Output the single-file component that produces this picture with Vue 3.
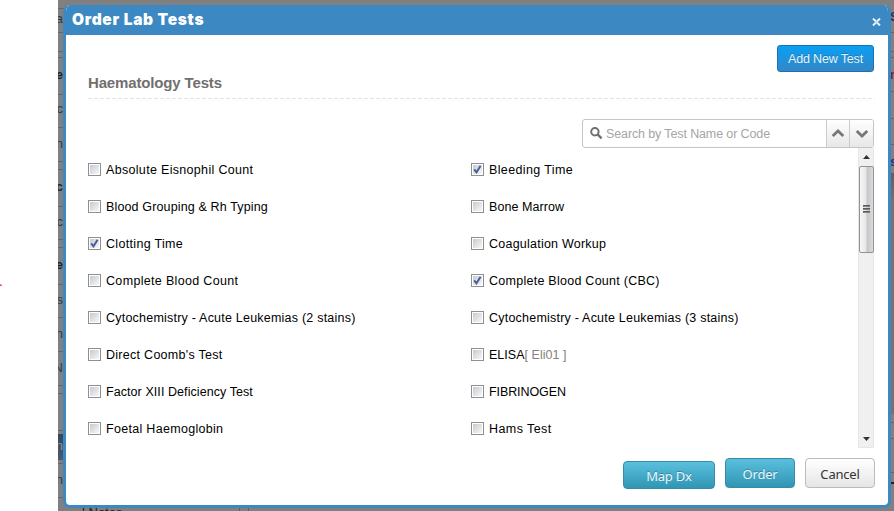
<script setup>
import { ref } from 'vue'

const tests = ref([
  { name: 'Absolute Eisnophil Count', w: 147 },
  { name: 'Bleeding Time', w: 84, on: true },
  { name: 'Blood Grouping & Rh Typing', w: 162 },
  { name: 'Bone Marrow', w: 75 },
  { name: 'Clotting Time', w: 77, on: true },
  { name: 'Coagulation Workup', w: 117 },
  { name: 'Complete Blood Count', w: 132 },
  { name: 'Complete Blood Count (CBC)', w: 170.5, on: true },
  { name: 'Cytochemistry - Acute Leukemias (2 stains)', w: 250 },
  { name: 'Cytochemistry - Acute Leukemias (3 stains)', w: 250 },
  { name: "Direct Coomb's Test", w: 116.5 },
  { name: 'ELISA', code: '[ Eli01 ]', w: 77.5 },
  { name: 'Factor XIII Deficiency Test', w: 147 },
  { name: 'FIBRINOGEN', w: 77 },
  { name: 'Foetal Haemoglobin', w: 117 },
  { name: 'Hams Test', w: 62.5 },
])

const canvas = document.createElement('canvas').getContext('2d')
canvas.font = '12.5px "Liberation Sans", Arial, sans-serif'
const spacing = (t) => {
  const s = t.name + (t.code || '')
  return ((t.w - canvas.measureText(s).width) / (s.length - 1)).toFixed(3) + 'px'
}

const leftLines = [8, 32, 51, 57, 94, 127, 161, 169, 206, 239, 247, 284, 317, 351, 385, 393, 430, 463, 497]
const rightLines = [32, 51, 57, 91, 118, 144, 422, 438, 472]
const leftBits = [
  { t: 'a', y: 11 }, { t: 'e', y: 67, b: true }, { t: 'c', y: 101 }, { t: 'n', y: 136 },
  { t: 'c', y: 179, b: true }, { t: 'c', y: 214 }, { t: 'e', y: 257, b: true }, { t: 's', y: 292 },
  { t: 'n', y: 326 }, { t: 'N', y: 360 }, { t: 'n', y: 438, light: true }, { t: 'n', y: 472 },
]
</script>

<template>
  <main class="screen">
    <div class="backdrop">
      <b class="navy"></b>
      <i v-for="y in leftLines" :key="'l' + y" class="line" :style="{ top: y + 'px' }"></i>
      <i v-for="y in rightLines" :key="'r' + y" class="line right" :style="{ top: y + 'px' }"></i>
      <span v-for="b in leftBits" :key="b.y" class="bit" :class="{ bold: b.b, light: b.light }" :style="{ top: b.y + 'px' }">{{ b.t }}</span>
      <span class="notes">l Notes</span>
      <b class="sep"></b>
      <b class="rbit blue">S</b>
      <b class="rbit red">n</b>
      <b class="rbit dots">s</b>
      <b class="rshade"></b>
      <b class="tick"></b>
    </div>
    <span class="required">.</span>

    <section class="dialog">
      <header class="bar">
        <h1>Order Lab Tests</h1>
        <svg class="close" width="9" height="8" viewBox="0 0 9 8"><path d="M1 .5 8 7.5M8 .5 1 7.5" stroke="#e6f1f8" stroke-width="2" /><path d="M3.5 4h2" stroke="#9cc4e2" /></svg>
      </header>
      <div class="body">
        <div class="top"><button class="add">Add New Test</button></div>
        <h2><span>Haematology Tests</span></h2>
        <div class="searchrow">
          <div class="search">
            <svg width="13" height="13" viewBox="0 0 13 13" fill="none" stroke="#707070" stroke-width="2"><circle cx="4.9" cy="4.7" r="3.7" /><path d="m7.6 7.4 4 4" stroke-width="2.4" /></svg>
            <span>Search by Test Name or Code</span>
          </div>
          <button class="step"><svg width="14" height="9" viewBox="0 0 14 9"><path d="m1.7 7 5.3-5 5.3 5" /></svg></button>
          <button class="step last"><svg width="14" height="9" viewBox="0 0 14 9"><path d="m1.7 2 5.3 5 5.3-5" /></svg></button>
        </div>
        <div class="scroller">
          <ul>
            <li v-for="t in tests" :key="t.name" @click="t.on = !t.on">
              <span class="box"><svg v-if="t.on" width="9" height="9" viewBox="0 0 9 9"><path d="m1.2 4.3 2.3 3L7.6.8" fill="none" stroke="#4a5f97" stroke-width="2" /></svg></span>
              <span class="name" :style="{ letterSpacing: spacing(t) }">{{ t.name }}<em v-if="t.code">{{ t.code }}</em></span>
            </li>
          </ul>
          <div class="track">
            <svg class="arrow" width="7" height="4" viewBox="0 0 7 4"><path d="M0 4 3.5 0 7 4Z" fill="#333" /></svg>
            <div class="thumb"><i></i><i></i><i></i></div>
            <svg class="arrow down" width="7" height="4" viewBox="0 0 7 4"><path d="M0 0 3.5 4 7 0Z" fill="#333" /></svg>
          </div>
        </div>
        <footer>
          <button class="teal map">Map Dx</button>
          <button class="teal">Order</button>
          <button class="cancel">Cancel</button>
        </footer>
      </div>
    </section>
  </main>
</template>

<style>
body { margin: 0; overflow: hidden; background: #fff; }
</style>

<style scoped>
* { box-sizing: border-box; }
.screen { position: relative; width: 894px; height: 511px; padding: 5px 3px 0 63px; overflow: hidden; font: 12.5px/15px "Liberation Sans", Arial, sans-serif; }
.backdrop { position: absolute; inset: 0 0 0 58px; background: #808080; overflow: hidden; }
.line { position: absolute; left: 0; width: 6px; height: 1px; background: #686868; }
.line.right { left: auto; right: 0; }
.bit { position: absolute; left: 0; width: 5px; direction: rtl; color: #37383c; font-size: 13px; }
.bold { font-weight: bold; color: #222; }
.light { color: #8b929b; }
.navy { position: absolute; left: 0; top: 434px; width: 6px; height: 26px; background: linear-gradient(#35475b, #4a5b70); }
.notes { position: absolute; left: 24px; top: 505px; font-size: 13px; color: #222; }
.sep { position: absolute; left: 181px; top: 508px; width: 10px; height: 3px; border: solid #606060; border-width: 0 1px; }
.rbit { position: absolute; left: 832px; width: 4px; overflow: hidden; }
.blue { top: 10px; color: #1f365d; }
.red { top: 68px; color: #821b34; }
.dots { top: 155px; color: #1f3080; }
.rshade { position: absolute; right: 0; top: 173px; width: 4px; height: 241px; background: linear-gradient(#606060, #737373 30px); }
.tick { position: absolute; right: 0; top: 482px; width: 3px; height: 2px; background: #222; }
.required { position: absolute; left: -1px; top: 274px; color: #f00; font-size: 14px; }
.dialog { position: relative; width: 828px; height: 503px; border: 3px solid #3c88c3; border-top: 0; border-radius: 7px; background: #fff; overflow: hidden; }
.bar { height: 30px; display: flex; justify-content: space-between; align-items: center; padding: 0 7px 0 6px; background: #3c88c3; }
h1 { margin: 0; color: #fff; font: 900 15.5px/30px Inter, "Arial Black", sans-serif; letter-spacing: .7px; }
.close { margin-top: 4px; }
.body { padding: 10px 13px 0 22px; }
.top { height: 27px; display: flex; justify-content: flex-end; padding-right: 1px; }
button { padding: 0; font-family: inherit; }
.add { width: 97px; height: 27px; border: 1px solid #1672b6; border-radius: 3px; background: linear-gradient(#08a0f4, #3686c4); color: #e8f4fb; font-size: 12.5px; letter-spacing: -.15px; text-shadow: 0 -1px rgba(0,0,0,.2); }
h2 { height: 27px; margin: 0; font: bold 15px/22px "Liberation Sans", Arial, sans-serif; color: #707070; background: repeating-linear-gradient(90deg, #dce6e6 0 4px, transparent 4px 6px) bottom / 100% 1px no-repeat; letter-spacing: -.15px; }
.searchrow { display: flex; height: 29px; width: 292px; margin: 20px 0 0 494px; border: 1px solid #c5c5c5; border-radius: 3px; overflow: hidden; }
.search { width: 243px; flex: none; display: flex; align-items: center; padding-left: 7px; color: #a5a5a5; gap: 3px; letter-spacing: -.12px; }
.search span { padding-top: 1px; }
.search svg { margin-top: -1px; }
.step { width: 23px; flex: none; border: 0; border-left: 1px solid #ccc; background: linear-gradient(#fff, #e7e7e7); display: flex; align-items: center; justify-content: center; }
.last { width: 24px; }
.step path { fill: none; stroke: #777; stroke-width: 2.8; }
.scroller { display: flex; height: 300px; width: 786px; }
ul { list-style: none; margin: 0; padding: 3px 0 0; width: 770px; display: grid; grid-template-columns: 383px 387px; grid-auto-rows: 37px; }
li { display: flex; align-items: center; gap: 5px; color: #000; white-space: nowrap; }
.name { padding-top: 2px; }
em { font-style: normal; color: #858078; }
.box { width: 13px; height: 13px; border: 1px solid #8e8f8f; background: linear-gradient(135deg, #c6cbd1, #f7f7f7) content-box #f4f4f4; padding: 1px; display: flex; align-items: center; justify-content: center; }
.track { width: 16px; display: flex; flex-direction: column; align-items: center; background: #f0f0f0; border: 1px solid #e6e6e6; border-top: 0; }
.arrow { margin-top: 7px; flex: none; }
.thumb { width: 15px; height: 87px; margin-top: 7px; border: 1px solid #929292; border-radius: 2px; background: linear-gradient(90deg, #f6f6f6, #e7e7e9 45%, #c6c6ca 55%, #dcdcde); display: flex; flex-direction: column; align-items: center; justify-content: center; gap: 1px; padding-bottom: 2px; }
.thumb i { width: 7px; height: 2px; background: linear-gradient(#454545, #999); }
.down { margin-top: auto; margin-bottom: 6px; }
footer { display: flex; justify-content: flex-end; align-items: flex-start; gap: 10px; padding-top: 10px; }
footer button { width: 70px; height: 30px; border-radius: 4px; font: 13px/28px "Noto Sans", Tahoma, sans-serif; letter-spacing: -.2px; padding-top: 1px; }
.teal { color: #e9f6fa; border: 1px solid #348ca6; background: linear-gradient(#5bc0de, #2f96b4); text-shadow: 0 -1px rgba(0,0,0,.25); }
footer .map { width: 92px; height: 28px; margin-top: 3px; line-height: 26px; }
.cancel { color: #333; border: 1px solid #bbb; background: linear-gradient(#fff, #e6e6e6); }
</style>
